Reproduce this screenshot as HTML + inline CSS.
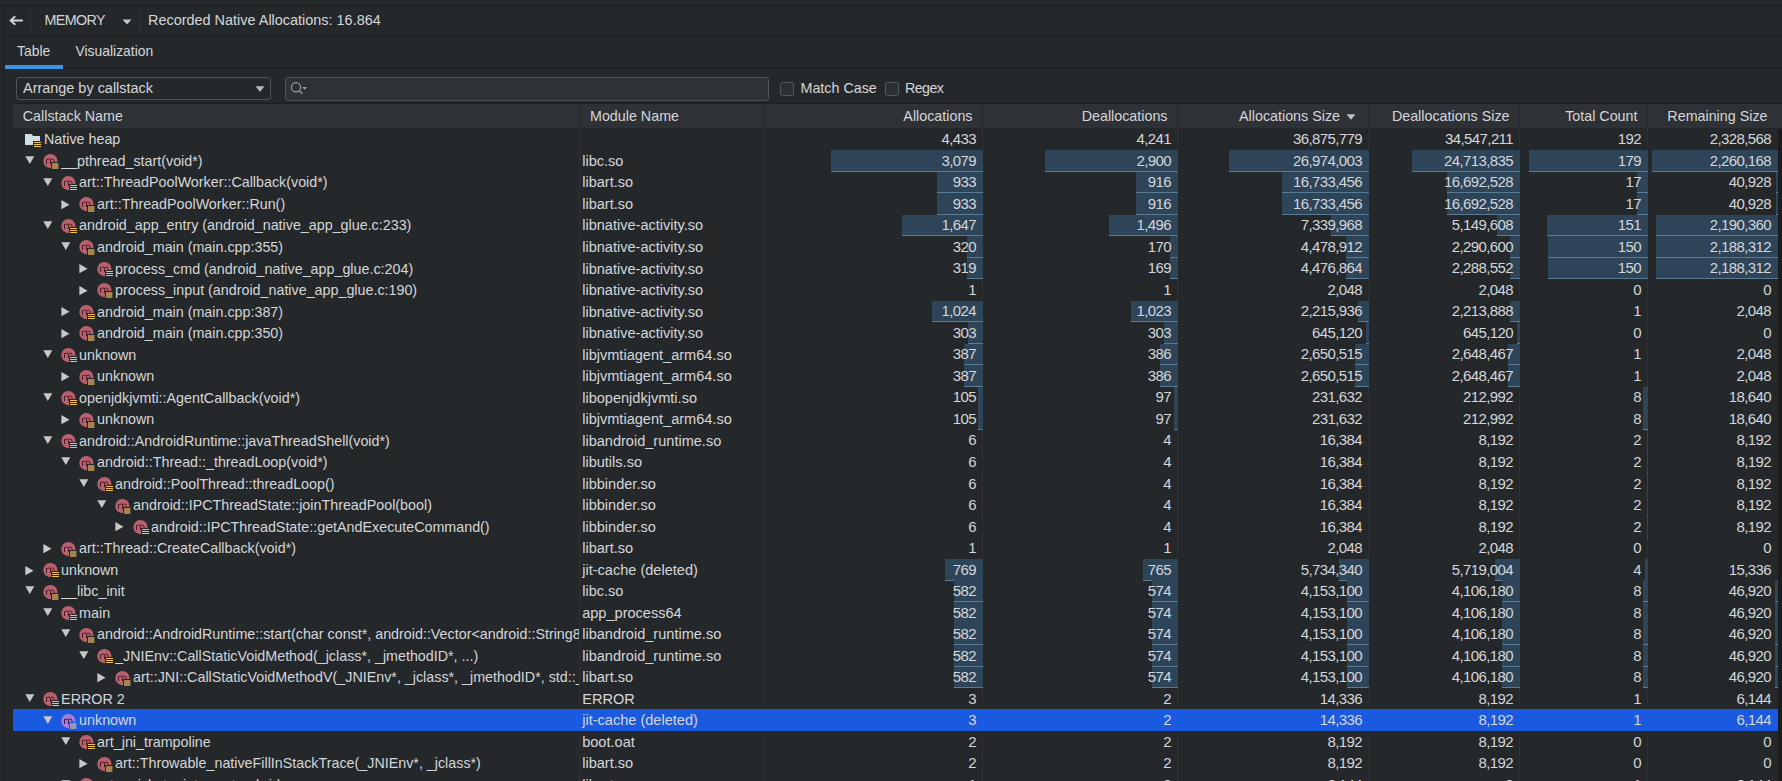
<!DOCTYPE html>
<html><head><meta charset="utf-8"><style>
*{margin:0;padding:0;box-sizing:border-box}
html,body{width:1782px;height:781px;overflow:hidden;background:#25282b;font-family:"Liberation Sans",sans-serif;color:#d4d6d9}
.a{position:absolute}
.t{position:absolute;white-space:nowrap;font-size:14.3px;line-height:17px}
.n{position:absolute;white-space:nowrap;font-size:15px;line-height:17px;text-align:right;letter-spacing:-0.6px}
.bar{position:absolute;background:#2d4459;border-bottom:1.3px solid #5b7a94}
.row{position:absolute;left:12.5px;width:1769.5px;height:21.54px}
</style></head>
<body>
<div class="a" style="left:0;top:0;width:1782px;height:5px;background:#26292c"></div>
<div class="a" style="left:0;top:5px;width:1782px;height:1px;background:#1c1e20"></div>
<div class="a" style="left:4px;top:5px;width:1px;height:776px;background:#1c1e20"></div>
<div class="a" style="left:0;top:133px;width:4px;height:1px;background:#1c1e20"></div>
<svg class="a" style="left:8px;top:14px" width="16" height="13" viewBox="0 0 16 13"><path d="M14.8 6.5H2.8M7.3 2.2L2.6 6.5L7.3 10.8" stroke="#d2d4d6" stroke-width="1.85" fill="none"/></svg>
<div class="a" style="left:30px;top:9px;width:1px;height:24px;background:repeating-linear-gradient(to bottom,#393c3f 0,#393c3f 2px,transparent 2px,transparent 3px)"></div>
<div class="t" style="left:44.5px;top:11.8px;font-size:14.3px;letter-spacing:-0.6px">MEMORY</div>
<svg class="a" style="left:122px;top:18.5px" width="10" height="6" viewBox="0 0 10 6"><path d="M0.5 0.5H9.5L5 5.5Z" fill="#c4c6c8"/></svg>
<div class="a" style="left:139px;top:9px;width:1px;height:24px;background:repeating-linear-gradient(to bottom,#393c3f 0,#393c3f 2px,transparent 2px,transparent 3px)"></div>
<div class="t" style="left:148px;top:12.2px;font-size:14.45px">Recorded Native Allocations: 16.864</div>
<div class="a" style="left:0;top:36px;width:1782px;height:1px;background:#1c1e20"></div>
<div class="t" style="left:17px;top:43px;font-size:13.9px">Table</div>
<div class="t" style="left:75.5px;top:43px;font-size:13.9px">Visualization</div>
<div class="a" style="left:5px;top:67px;width:1777px;height:2px;background:#1c1e20"></div>
<div class="a" style="left:4.5px;top:65px;width:58.5px;height:3.6px;background:#3a92e8"></div>
<div class="a" style="left:15.5px;top:76.5px;width:255.5px;height:23.5px;border:1px solid #505356;border-radius:3px"></div>
<div class="t" style="left:23px;top:79.8px;font-size:14.45px">Arrange by callstack</div>
<svg class="a" style="left:254.5px;top:85.5px" width="10" height="6" viewBox="0 0 10 6"><path d="M0.5 0.3H9.5L5 5.8Z" fill="#b8bcc0"/></svg>
<div class="a" style="left:285px;top:76.5px;width:484px;height:24px;background:#2e3235;border:1px solid #4f5255;border-radius:3px"></div>
<svg class="a" style="left:289px;top:80px" width="20" height="16" viewBox="0 0 20 16"><circle cx="7" cy="7.3" r="4.6" stroke="#8d9aa3" stroke-width="1.2" fill="none"/><path d="M10.2 10.6L13.4 13.8" stroke="#8d9aa3" stroke-width="1.4"/><path d="M13.3 7H18.1L15.7 10.1Z" fill="#8d9aa3"/></svg>
<div class="a" style="left:780px;top:81.5px;width:14px;height:14px;background:#2b3032;border:1px solid #55585b;border-radius:2.5px"></div>
<div class="t" style="left:800.5px;top:79.5px">Match Case</div>
<div class="a" style="left:884.5px;top:81.5px;width:14px;height:14px;background:#2b3032;border:1px solid #55585b;border-radius:2.5px"></div>
<div class="t" style="left:905px;top:79.5px;letter-spacing:-0.6px">Regex</div>
<div class="a" style="left:12.5px;top:103px;width:1769.5px;height:1px;background:#1c1e20"></div>
<div class="a" style="left:12.5px;top:104px;width:1769.5px;height:24px;background:#2e3135"></div>
<div class="a" style="left:579.0px;top:104px;width:1px;height:24px;background:#25282b"></div>
<div class="a" style="left:763.0px;top:104px;width:1px;height:24px;background:#25282b"></div>
<div class="a" style="left:982.0px;top:104px;width:1px;height:24px;background:#25282b"></div>
<div class="a" style="left:1177.0px;top:104px;width:1px;height:24px;background:#25282b"></div>
<div class="a" style="left:1368.0px;top:104px;width:1px;height:24px;background:#25282b"></div>
<div class="a" style="left:1519.0px;top:104px;width:1px;height:24px;background:#25282b"></div>
<div class="a" style="left:1647.0px;top:104px;width:1px;height:24px;background:#25282b"></div>
<div class="t" style="left:22.8px;top:107.5px">Callstack Name</div>
<div class="t" style="left:590px;top:107.5px">Module Name</div>
<div class="t" style="right:809.5px;top:107.5px">Allocations</div>
<div class="t" style="right:614.5px;top:107.5px">Deallocations</div>
<div class="t" style="right:442.0px;top:107.5px">Allocations Size</div>
<div class="t" style="right:272.5px;top:107.5px">Deallocations Size</div>
<div class="t" style="right:144.5px;top:107.5px">Total Count</div>
<div class="t" style="right:14.5px;top:107.5px">Remaining Size</div>
<svg class="a" style="left:1345.5px;top:113.5px" width="10" height="6" viewBox="0 0 10 6"><path d="M0.5 0.3H9.5L5 5.8Z" fill="#c0c2c4"/></svg>
<div class="a" style="left:579.0px;top:128px;width:1px;height:653px;background:#2e3134"></div>
<div class="a" style="left:763.0px;top:128px;width:1px;height:653px;background:#2e3134"></div>
<div class="a" style="left:982.0px;top:128px;width:1px;height:653px;background:#2e3134"></div>
<div class="a" style="left:1177.0px;top:128px;width:1px;height:653px;background:#2e3134"></div>
<div class="a" style="left:1368.0px;top:128px;width:1px;height:653px;background:#2e3134"></div>
<div class="a" style="left:1519.0px;top:128px;width:1px;height:653px;background:#2e3134"></div>
<div class="a" style="left:1647.0px;top:128px;width:1px;height:653px;background:#2e3134"></div>
<div class="a" style="left:1778px;top:128.5px;width:4px;height:653px;background:#1a1c1e"></div>
<svg class="a" style="left:25px;top:133px" width="18" height="16" viewBox="0 0 18 16"><path d="M0 1H6.3L8.2 3H15V12H0Z" fill="#cfdde5"/><rect x="8" y="8" width="9" height="7" fill="#25282b"/><rect x="9" y="9" width="7" height="1" fill="#eec465"/><rect x="9" y="11" width="7" height="1" fill="#eec465"/><rect x="9" y="13" width="7" height="1" fill="#eec465"/></svg>
<div class="t" style="left:44px;top:131.4px;max-width:535.0px;overflow:hidden">Native heap</div>
<div class="n" style="right:806.0px;top:130.20px">4,433</div>
<div class="n" style="right:611.0px;top:130.20px">4,241</div>
<div class="n" style="right:420.0px;top:130.20px">36,875,779</div>
<div class="n" style="right:269.0px;top:130.20px">34,547,211</div>
<div class="n" style="right:141.0px;top:130.20px">192</div>
<div class="n" style="right:11.0px;top:130.20px">2,328,568</div>
<svg class="a" style="left:25px;top:156px" width="10" height="9" viewBox="0 0 10 9"><path d="M0.3 0.2H9.3L4.8 8.1Z" fill="#c8c8c8"/></svg>
<svg class="a" style="left:43px;top:154px" width="18" height="16" viewBox="0 0 18 16"><circle cx="7.4" cy="7.1" r="7.1" fill="#b9606f"/><path d="M3.5 10V5.2M3.5 6.3Q4.3 5 5.6 5Q7.5 5 7.5 6.6V10M7.5 6.6Q7.6 5 9.2 5Q11 5 11 6.8V10" stroke="#4a1c26" stroke-width="1" fill="none"/><rect x="8" y="8" width="8" height="8" fill="#25282b"/><rect x="9" y="9" width="6.4" height="6" fill="#a5844f"/></svg>
<div class="t" style="left:61.1px;top:152.92000000000002px;max-width:517.9px;overflow:hidden">__pthread_start(void*)</div>
<div class="t" style="left:582.2px;top:152.92000000000002px;font-size:14.55px">libc.so</div>
<div class="bar" style="left:830.89px;top:150.02px;width:152.11px;height:21.8px"></div>
<div class="n" style="right:806.0px;top:151.72px">3,079</div>
<div class="bar" style="left:1044.66px;top:150.02px;width:133.34px;height:21.8px"></div>
<div class="n" style="right:611.0px;top:151.72px">2,900</div>
<div class="bar" style="left:1229.29px;top:150.02px;width:139.71px;height:21.8px"></div>
<div class="n" style="right:420.0px;top:151.72px">26,974,003</div>
<div class="bar" style="left:1411.98px;top:150.02px;width:108.02px;height:21.8px"></div>
<div class="n" style="right:269.0px;top:151.72px">24,713,835</div>
<div class="bar" style="left:1528.67px;top:150.02px;width:119.33px;height:21.8px"></div>
<div class="n" style="right:141.0px;top:151.72px">179</div>
<div class="bar" style="left:1651.82px;top:150.02px;width:126.18px;height:21.8px"></div>
<div class="n" style="right:11.0px;top:151.72px">2,260,168</div>
<svg class="a" style="left:43px;top:178px" width="10" height="9" viewBox="0 0 10 9"><path d="M0.3 0.2H9.3L4.8 8.1Z" fill="#c8c8c8"/></svg>
<svg class="a" style="left:61px;top:176px" width="18" height="16" viewBox="0 0 18 16"><circle cx="7.4" cy="7.1" r="7.1" fill="#b9606f"/><path d="M3.5 10V5.2M3.5 6.3Q4.3 5 5.6 5Q7.5 5 7.5 6.6V10M7.5 6.6Q7.6 5 9.2 5Q11 5 11 6.8V10" stroke="#4a1c26" stroke-width="1" fill="none"/><rect x="8" y="8" width="9" height="7" fill="#25282b"/><rect x="9" y="9" width="7" height="1" fill="#eac262"/><rect x="9" y="11" width="7" height="1" fill="#eac262"/><rect x="9" y="13" width="7" height="1" fill="#eac262"/></svg>
<div class="t" style="left:79.1px;top:174.44px;max-width:499.9px;overflow:hidden">art::ThreadPoolWorker::Callback(void*)</div>
<div class="t" style="left:582.2px;top:174.44px;font-size:14.55px">libart.so</div>
<div class="bar" style="left:936.91px;top:171.54px;width:46.09px;height:21.8px"></div>
<div class="n" style="right:806.0px;top:173.24px">933</div>
<div class="bar" style="left:1135.88px;top:171.54px;width:42.12px;height:21.8px"></div>
<div class="n" style="right:611.0px;top:173.24px">916</div>
<div class="bar" style="left:1282.33px;top:171.54px;width:86.67px;height:21.8px"></div>
<div class="n" style="right:420.0px;top:173.24px">16,733,456</div>
<div class="bar" style="left:1447.04px;top:171.54px;width:72.96px;height:21.8px"></div>
<div class="n" style="right:269.0px;top:173.24px">16,692,528</div>
<div class="bar" style="left:1636.67px;top:171.54px;width:11.33px;height:21.8px"></div>
<div class="n" style="right:141.0px;top:173.24px">17</div>
<div class="bar" style="left:1775.72px;top:171.54px;width:2.28px;height:21.8px"></div>
<div class="n" style="right:11.0px;top:173.24px">40,928</div>
<svg class="a" style="left:61px;top:200px" width="10" height="10" viewBox="0 0 10 10"><path d="M0.4 0.1V9.3L8.5 4.7Z" fill="#c8c8c8"/></svg>
<svg class="a" style="left:79px;top:197px" width="18" height="16" viewBox="0 0 18 16"><circle cx="7.4" cy="7.1" r="7.1" fill="#b9606f"/><path d="M3.5 10V5.2M3.5 6.3Q4.3 5 5.6 5Q7.5 5 7.5 6.6V10M7.5 6.6Q7.6 5 9.2 5Q11 5 11 6.8V10" stroke="#4a1c26" stroke-width="1" fill="none"/><rect x="8" y="8" width="8" height="8" fill="#25282b"/><rect x="9" y="9" width="6.4" height="6" fill="#a5844f"/></svg>
<div class="t" style="left:97.1px;top:195.96px;max-width:481.9px;overflow:hidden">art::ThreadPoolWorker::Run()</div>
<div class="t" style="left:582.2px;top:195.96px;font-size:14.55px">libart.so</div>
<div class="bar" style="left:936.91px;top:193.06px;width:46.09px;height:21.8px"></div>
<div class="n" style="right:806.0px;top:194.76px">933</div>
<div class="bar" style="left:1135.88px;top:193.06px;width:42.12px;height:21.8px"></div>
<div class="n" style="right:611.0px;top:194.76px">916</div>
<div class="bar" style="left:1282.33px;top:193.06px;width:86.67px;height:21.8px"></div>
<div class="n" style="right:420.0px;top:194.76px">16,733,456</div>
<div class="bar" style="left:1447.04px;top:193.06px;width:72.96px;height:21.8px"></div>
<div class="n" style="right:269.0px;top:194.76px">16,692,528</div>
<div class="bar" style="left:1636.67px;top:193.06px;width:11.33px;height:21.8px"></div>
<div class="n" style="right:141.0px;top:194.76px">17</div>
<div class="bar" style="left:1775.72px;top:193.06px;width:2.28px;height:21.8px"></div>
<div class="n" style="right:11.0px;top:194.76px">40,928</div>
<svg class="a" style="left:43px;top:221px" width="10" height="9" viewBox="0 0 10 9"><path d="M0.3 0.2H9.3L4.8 8.1Z" fill="#c8c8c8"/></svg>
<svg class="a" style="left:61px;top:219px" width="18" height="16" viewBox="0 0 18 16"><circle cx="7.4" cy="7.1" r="7.1" fill="#b9606f"/><path d="M3.5 10V5.2M3.5 6.3Q4.3 5 5.6 5Q7.5 5 7.5 6.6V10M7.5 6.6Q7.6 5 9.2 5Q11 5 11 6.8V10" stroke="#4a1c26" stroke-width="1" fill="none"/><rect x="8" y="8" width="9" height="7" fill="#25282b"/><rect x="9" y="9" width="7" height="1" fill="#eac262"/><rect x="9" y="11" width="7" height="1" fill="#eac262"/><rect x="9" y="13" width="7" height="1" fill="#eac262"/></svg>
<div class="t" style="left:79.1px;top:217.48px;max-width:499.9px;overflow:hidden">android_app_entry (android_native_app_glue.c:233)</div>
<div class="t" style="left:582.2px;top:217.48px;font-size:14.55px">libnative-activity.so</div>
<div class="bar" style="left:901.63px;top:214.58px;width:81.37px;height:21.8px"></div>
<div class="n" style="right:806.0px;top:216.28px">1,647</div>
<div class="bar" style="left:1109.21px;top:214.58px;width:68.79px;height:21.8px"></div>
<div class="n" style="right:611.0px;top:216.28px">1,496</div>
<div class="bar" style="left:1330.98px;top:214.58px;width:38.02px;height:21.8px"></div>
<div class="n" style="right:420.0px;top:216.28px">7,339,968</div>
<div class="bar" style="left:1497.49px;top:214.58px;width:22.51px;height:21.8px"></div>
<div class="n" style="right:269.0px;top:216.28px">5,149,608</div>
<div class="bar" style="left:1547.33px;top:214.58px;width:100.67px;height:21.8px"></div>
<div class="n" style="right:141.0px;top:216.28px">151</div>
<div class="bar" style="left:1655.72px;top:214.58px;width:122.28px;height:21.8px"></div>
<div class="n" style="right:11.0px;top:216.28px">2,190,360</div>
<svg class="a" style="left:61px;top:242px" width="10" height="9" viewBox="0 0 10 9"><path d="M0.3 0.2H9.3L4.8 8.1Z" fill="#c8c8c8"/></svg>
<svg class="a" style="left:79px;top:240px" width="18" height="16" viewBox="0 0 18 16"><circle cx="7.4" cy="7.1" r="7.1" fill="#b9606f"/><path d="M3.5 10V5.2M3.5 6.3Q4.3 5 5.6 5Q7.5 5 7.5 6.6V10M7.5 6.6Q7.6 5 9.2 5Q11 5 11 6.8V10" stroke="#4a1c26" stroke-width="1" fill="none"/><rect x="8" y="8" width="8" height="8" fill="#25282b"/><rect x="9" y="9" width="6.4" height="6" fill="#a5844f"/></svg>
<div class="t" style="left:97.1px;top:239.0px;max-width:481.9px;overflow:hidden">android_main (main.cpp:355)</div>
<div class="t" style="left:582.2px;top:239.0px;font-size:14.55px">libnative-activity.so</div>
<div class="bar" style="left:967.19px;top:236.10px;width:15.81px;height:21.8px"></div>
<div class="n" style="right:806.0px;top:237.80px">320</div>
<div class="bar" style="left:1170.18px;top:236.10px;width:7.82px;height:21.8px"></div>
<div class="n" style="right:611.0px;top:237.80px">170</div>
<div class="bar" style="left:1345.80px;top:236.10px;width:23.20px;height:21.8px"></div>
<div class="n" style="right:420.0px;top:237.80px">4,478,912</div>
<div class="bar" style="left:1509.99px;top:236.10px;width:10.01px;height:21.8px"></div>
<div class="n" style="right:269.0px;top:237.80px">2,290,600</div>
<div class="bar" style="left:1548.00px;top:236.10px;width:100.00px;height:21.8px"></div>
<div class="n" style="right:141.0px;top:237.80px">150</div>
<div class="bar" style="left:1655.83px;top:236.10px;width:122.17px;height:21.8px"></div>
<div class="n" style="right:11.0px;top:237.80px">2,188,312</div>
<svg class="a" style="left:79px;top:264px" width="10" height="10" viewBox="0 0 10 10"><path d="M0.4 0.1V9.3L8.5 4.7Z" fill="#c8c8c8"/></svg>
<svg class="a" style="left:97px;top:262px" width="18" height="16" viewBox="0 0 18 16"><circle cx="7.4" cy="7.1" r="7.1" fill="#b9606f"/><path d="M3.5 10V5.2M3.5 6.3Q4.3 5 5.6 5Q7.5 5 7.5 6.6V10M7.5 6.6Q7.6 5 9.2 5Q11 5 11 6.8V10" stroke="#4a1c26" stroke-width="1" fill="none"/><rect x="8" y="8" width="9" height="7" fill="#25282b"/><rect x="9" y="9" width="7" height="1" fill="#eac262"/><rect x="9" y="11" width="7" height="1" fill="#eac262"/><rect x="9" y="13" width="7" height="1" fill="#eac262"/></svg>
<div class="t" style="left:115.10000000000001px;top:260.52000000000004px;max-width:463.9px;overflow:hidden">process_cmd (android_native_app_glue.c:204)</div>
<div class="t" style="left:582.2px;top:260.52000000000004px;font-size:14.55px">libnative-activity.so</div>
<div class="bar" style="left:967.24px;top:257.62px;width:15.76px;height:21.8px"></div>
<div class="n" style="right:806.0px;top:259.32px">319</div>
<div class="bar" style="left:1170.23px;top:257.62px;width:7.77px;height:21.8px"></div>
<div class="n" style="right:611.0px;top:259.32px">169</div>
<div class="bar" style="left:1345.81px;top:257.62px;width:23.19px;height:21.8px"></div>
<div class="n" style="right:420.0px;top:259.32px">4,476,864</div>
<div class="bar" style="left:1510.00px;top:257.62px;width:10.00px;height:21.8px"></div>
<div class="n" style="right:269.0px;top:259.32px">2,288,552</div>
<div class="bar" style="left:1548.00px;top:257.62px;width:100.00px;height:21.8px"></div>
<div class="n" style="right:141.0px;top:259.32px">150</div>
<div class="bar" style="left:1655.83px;top:257.62px;width:122.17px;height:21.8px"></div>
<div class="n" style="right:11.0px;top:259.32px">2,188,312</div>
<svg class="a" style="left:79px;top:286px" width="10" height="10" viewBox="0 0 10 10"><path d="M0.4 0.1V9.3L8.5 4.7Z" fill="#c8c8c8"/></svg>
<svg class="a" style="left:97px;top:283px" width="18" height="16" viewBox="0 0 18 16"><circle cx="7.4" cy="7.1" r="7.1" fill="#b9606f"/><path d="M3.5 10V5.2M3.5 6.3Q4.3 5 5.6 5Q7.5 5 7.5 6.6V10M7.5 6.6Q7.6 5 9.2 5Q11 5 11 6.8V10" stroke="#4a1c26" stroke-width="1" fill="none"/><rect x="8" y="8" width="8" height="8" fill="#25282b"/><rect x="9" y="9" width="6.4" height="6" fill="#a5844f"/></svg>
<div class="t" style="left:115.10000000000001px;top:282.04px;max-width:463.9px;overflow:hidden">process_input (android_native_app_glue.c:190)</div>
<div class="t" style="left:582.2px;top:282.04px;font-size:14.55px">libnative-activity.so</div>
<div class="n" style="right:806.0px;top:280.84px">1</div>
<div class="n" style="right:611.0px;top:280.84px">1</div>
<div class="n" style="right:420.0px;top:280.84px">2,048</div>
<div class="n" style="right:269.0px;top:280.84px">2,048</div>
<div class="n" style="right:141.0px;top:280.84px">0</div>
<div class="n" style="right:11.0px;top:280.84px">0</div>
<svg class="a" style="left:61px;top:307px" width="10" height="10" viewBox="0 0 10 10"><path d="M0.4 0.1V9.3L8.5 4.7Z" fill="#c8c8c8"/></svg>
<svg class="a" style="left:79px;top:305px" width="18" height="16" viewBox="0 0 18 16"><circle cx="7.4" cy="7.1" r="7.1" fill="#b9606f"/><path d="M3.5 10V5.2M3.5 6.3Q4.3 5 5.6 5Q7.5 5 7.5 6.6V10M7.5 6.6Q7.6 5 9.2 5Q11 5 11 6.8V10" stroke="#4a1c26" stroke-width="1" fill="none"/><rect x="8" y="8" width="9" height="7" fill="#25282b"/><rect x="9" y="9" width="7" height="1" fill="#eac262"/><rect x="9" y="11" width="7" height="1" fill="#eac262"/><rect x="9" y="13" width="7" height="1" fill="#eac262"/></svg>
<div class="t" style="left:97.1px;top:303.56000000000006px;max-width:481.9px;overflow:hidden">android_main (main.cpp:387)</div>
<div class="t" style="left:582.2px;top:303.56000000000006px;font-size:14.55px">libnative-activity.so</div>
<div class="bar" style="left:932.41px;top:300.66px;width:50.59px;height:21.8px"></div>
<div class="n" style="right:806.0px;top:302.36px">1,024</div>
<div class="bar" style="left:1130.96px;top:300.66px;width:47.04px;height:21.8px"></div>
<div class="n" style="right:611.0px;top:302.36px">1,023</div>
<div class="bar" style="left:1357.52px;top:300.66px;width:11.48px;height:21.8px"></div>
<div class="n" style="right:420.0px;top:302.36px">2,215,936</div>
<div class="bar" style="left:1510.32px;top:300.66px;width:9.68px;height:21.8px"></div>
<div class="n" style="right:269.0px;top:302.36px">2,213,888</div>
<div class="n" style="right:141.0px;top:302.36px">1</div>
<div class="n" style="right:11.0px;top:302.36px">2,048</div>
<svg class="a" style="left:61px;top:329px" width="10" height="10" viewBox="0 0 10 10"><path d="M0.4 0.1V9.3L8.5 4.7Z" fill="#c8c8c8"/></svg>
<svg class="a" style="left:79px;top:326px" width="18" height="16" viewBox="0 0 18 16"><circle cx="7.4" cy="7.1" r="7.1" fill="#b9606f"/><path d="M3.5 10V5.2M3.5 6.3Q4.3 5 5.6 5Q7.5 5 7.5 6.6V10M7.5 6.6Q7.6 5 9.2 5Q11 5 11 6.8V10" stroke="#4a1c26" stroke-width="1" fill="none"/><rect x="8" y="8" width="8" height="8" fill="#25282b"/><rect x="9" y="9" width="6.4" height="6" fill="#a5844f"/></svg>
<div class="t" style="left:97.1px;top:325.08000000000004px;max-width:481.9px;overflow:hidden">android_main (main.cpp:350)</div>
<div class="t" style="left:582.2px;top:325.08000000000004px;font-size:14.55px">libnative-activity.so</div>
<div class="bar" style="left:968.03px;top:322.18px;width:14.97px;height:21.8px"></div>
<div class="n" style="right:806.0px;top:323.88px">303</div>
<div class="bar" style="left:1164.07px;top:322.18px;width:13.93px;height:21.8px"></div>
<div class="n" style="right:611.0px;top:323.88px">303</div>
<div class="bar" style="left:1365.66px;top:322.18px;width:3.34px;height:21.8px"></div>
<div class="n" style="right:420.0px;top:323.88px">645,120</div>
<div class="bar" style="left:1517.18px;top:322.18px;width:2.82px;height:21.8px"></div>
<div class="n" style="right:269.0px;top:323.88px">645,120</div>
<div class="n" style="right:141.0px;top:323.88px">0</div>
<div class="n" style="right:11.0px;top:323.88px">0</div>
<svg class="a" style="left:43px;top:350px" width="10" height="9" viewBox="0 0 10 9"><path d="M0.3 0.2H9.3L4.8 8.1Z" fill="#c8c8c8"/></svg>
<svg class="a" style="left:61px;top:348px" width="18" height="16" viewBox="0 0 18 16"><circle cx="7.4" cy="7.1" r="7.1" fill="#b9606f"/><path d="M3.5 10V5.2M3.5 6.3Q4.3 5 5.6 5Q7.5 5 7.5 6.6V10M7.5 6.6Q7.6 5 9.2 5Q11 5 11 6.8V10" stroke="#4a1c26" stroke-width="1" fill="none"/><rect x="8" y="8" width="9" height="7" fill="#25282b"/><rect x="9" y="9" width="7" height="1" fill="#eac262"/><rect x="9" y="11" width="7" height="1" fill="#eac262"/><rect x="9" y="13" width="7" height="1" fill="#eac262"/></svg>
<div class="t" style="left:79.1px;top:346.6px;max-width:499.9px;overflow:hidden">unknown</div>
<div class="t" style="left:582.2px;top:346.6px;font-size:14.55px">libjvmtiagent_arm64.so</div>
<div class="bar" style="left:963.88px;top:343.70px;width:19.12px;height:21.8px"></div>
<div class="n" style="right:806.0px;top:345.40px">387</div>
<div class="bar" style="left:1160.25px;top:343.70px;width:17.75px;height:21.8px"></div>
<div class="n" style="right:611.0px;top:345.40px">386</div>
<div class="bar" style="left:1355.27px;top:343.70px;width:13.73px;height:21.8px"></div>
<div class="n" style="right:420.0px;top:345.40px">2,650,515</div>
<div class="bar" style="left:1508.42px;top:343.70px;width:11.58px;height:21.8px"></div>
<div class="n" style="right:269.0px;top:345.40px">2,648,467</div>
<div class="n" style="right:141.0px;top:345.40px">1</div>
<div class="n" style="right:11.0px;top:345.40px">2,048</div>
<svg class="a" style="left:61px;top:372px" width="10" height="10" viewBox="0 0 10 10"><path d="M0.4 0.1V9.3L8.5 4.7Z" fill="#c8c8c8"/></svg>
<svg class="a" style="left:79px;top:370px" width="18" height="16" viewBox="0 0 18 16"><circle cx="7.4" cy="7.1" r="7.1" fill="#b9606f"/><path d="M3.5 10V5.2M3.5 6.3Q4.3 5 5.6 5Q7.5 5 7.5 6.6V10M7.5 6.6Q7.6 5 9.2 5Q11 5 11 6.8V10" stroke="#4a1c26" stroke-width="1" fill="none"/><rect x="8" y="8" width="8" height="8" fill="#25282b"/><rect x="9" y="9" width="6.4" height="6" fill="#a5844f"/></svg>
<div class="t" style="left:97.1px;top:368.12px;max-width:481.9px;overflow:hidden">unknown</div>
<div class="t" style="left:582.2px;top:368.12px;font-size:14.55px">libjvmtiagent_arm64.so</div>
<div class="bar" style="left:963.88px;top:365.22px;width:19.12px;height:21.8px"></div>
<div class="n" style="right:806.0px;top:366.92px">387</div>
<div class="bar" style="left:1160.25px;top:365.22px;width:17.75px;height:21.8px"></div>
<div class="n" style="right:611.0px;top:366.92px">386</div>
<div class="bar" style="left:1355.27px;top:365.22px;width:13.73px;height:21.8px"></div>
<div class="n" style="right:420.0px;top:366.92px">2,650,515</div>
<div class="bar" style="left:1508.42px;top:365.22px;width:11.58px;height:21.8px"></div>
<div class="n" style="right:269.0px;top:366.92px">2,648,467</div>
<div class="n" style="right:141.0px;top:366.92px">1</div>
<div class="n" style="right:11.0px;top:366.92px">2,048</div>
<svg class="a" style="left:43px;top:393px" width="10" height="9" viewBox="0 0 10 9"><path d="M0.3 0.2H9.3L4.8 8.1Z" fill="#c8c8c8"/></svg>
<svg class="a" style="left:61px;top:391px" width="18" height="16" viewBox="0 0 18 16"><circle cx="7.4" cy="7.1" r="7.1" fill="#b9606f"/><path d="M3.5 10V5.2M3.5 6.3Q4.3 5 5.6 5Q7.5 5 7.5 6.6V10M7.5 6.6Q7.6 5 9.2 5Q11 5 11 6.8V10" stroke="#4a1c26" stroke-width="1" fill="none"/><rect x="8" y="8" width="9" height="7" fill="#25282b"/><rect x="9" y="9" width="7" height="1" fill="#eac262"/><rect x="9" y="11" width="7" height="1" fill="#eac262"/><rect x="9" y="13" width="7" height="1" fill="#eac262"/></svg>
<div class="t" style="left:79.1px;top:389.64000000000004px;max-width:499.9px;overflow:hidden">openjdkjvmti::AgentCallback(void*)</div>
<div class="t" style="left:582.2px;top:389.64000000000004px;font-size:14.55px">libopenjdkjvmti.so</div>
<div class="bar" style="left:977.81px;top:386.74px;width:5.19px;height:21.8px"></div>
<div class="n" style="right:806.0px;top:388.44px">105</div>
<div class="bar" style="left:1173.54px;top:386.74px;width:4.46px;height:21.8px"></div>
<div class="n" style="right:611.0px;top:388.44px">97</div>
<div class="n" style="right:420.0px;top:388.44px">231,632</div>
<div class="n" style="right:269.0px;top:388.44px">212,992</div>
<div class="bar" style="left:1642.67px;top:386.74px;width:5.33px;height:21.8px"></div>
<div class="n" style="right:141.0px;top:388.44px">8</div>
<div class="n" style="right:11.0px;top:388.44px">18,640</div>
<svg class="a" style="left:61px;top:415px" width="10" height="10" viewBox="0 0 10 10"><path d="M0.4 0.1V9.3L8.5 4.7Z" fill="#c8c8c8"/></svg>
<svg class="a" style="left:79px;top:413px" width="18" height="16" viewBox="0 0 18 16"><circle cx="7.4" cy="7.1" r="7.1" fill="#b9606f"/><path d="M3.5 10V5.2M3.5 6.3Q4.3 5 5.6 5Q7.5 5 7.5 6.6V10M7.5 6.6Q7.6 5 9.2 5Q11 5 11 6.8V10" stroke="#4a1c26" stroke-width="1" fill="none"/><rect x="8" y="8" width="8" height="8" fill="#25282b"/><rect x="9" y="9" width="6.4" height="6" fill="#a5844f"/></svg>
<div class="t" style="left:97.1px;top:411.16px;max-width:481.9px;overflow:hidden">unknown</div>
<div class="t" style="left:582.2px;top:411.16px;font-size:14.55px">libjvmtiagent_arm64.so</div>
<div class="bar" style="left:977.81px;top:408.26px;width:5.19px;height:21.8px"></div>
<div class="n" style="right:806.0px;top:409.96px">105</div>
<div class="bar" style="left:1173.54px;top:408.26px;width:4.46px;height:21.8px"></div>
<div class="n" style="right:611.0px;top:409.96px">97</div>
<div class="n" style="right:420.0px;top:409.96px">231,632</div>
<div class="n" style="right:269.0px;top:409.96px">212,992</div>
<div class="bar" style="left:1642.67px;top:408.26px;width:5.33px;height:21.8px"></div>
<div class="n" style="right:141.0px;top:409.96px">8</div>
<div class="n" style="right:11.0px;top:409.96px">18,640</div>
<svg class="a" style="left:43px;top:436px" width="10" height="9" viewBox="0 0 10 9"><path d="M0.3 0.2H9.3L4.8 8.1Z" fill="#c8c8c8"/></svg>
<svg class="a" style="left:61px;top:434px" width="18" height="16" viewBox="0 0 18 16"><circle cx="7.4" cy="7.1" r="7.1" fill="#b9606f"/><path d="M3.5 10V5.2M3.5 6.3Q4.3 5 5.6 5Q7.5 5 7.5 6.6V10M7.5 6.6Q7.6 5 9.2 5Q11 5 11 6.8V10" stroke="#4a1c26" stroke-width="1" fill="none"/><rect x="8" y="8" width="9" height="7" fill="#25282b"/><rect x="9" y="9" width="7" height="1" fill="#eac262"/><rect x="9" y="11" width="7" height="1" fill="#eac262"/><rect x="9" y="13" width="7" height="1" fill="#eac262"/></svg>
<div class="t" style="left:79.1px;top:432.68px;max-width:499.9px;overflow:hidden">android::AndroidRuntime::javaThreadShell(void*)</div>
<div class="t" style="left:582.2px;top:432.68px;font-size:14.55px">libandroid_runtime.so</div>
<div class="n" style="right:806.0px;top:431.48px">6</div>
<div class="n" style="right:611.0px;top:431.48px">4</div>
<div class="n" style="right:420.0px;top:431.48px">16,384</div>
<div class="n" style="right:269.0px;top:431.48px">8,192</div>
<div class="bar" style="left:1646.67px;top:429.78px;width:1.33px;height:21.8px"></div>
<div class="n" style="right:141.0px;top:431.48px">2</div>
<div class="n" style="right:11.0px;top:431.48px">8,192</div>
<svg class="a" style="left:61px;top:457px" width="10" height="9" viewBox="0 0 10 9"><path d="M0.3 0.2H9.3L4.8 8.1Z" fill="#c8c8c8"/></svg>
<svg class="a" style="left:79px;top:456px" width="18" height="16" viewBox="0 0 18 16"><circle cx="7.4" cy="7.1" r="7.1" fill="#b9606f"/><path d="M3.5 10V5.2M3.5 6.3Q4.3 5 5.6 5Q7.5 5 7.5 6.6V10M7.5 6.6Q7.6 5 9.2 5Q11 5 11 6.8V10" stroke="#4a1c26" stroke-width="1" fill="none"/><rect x="8" y="8" width="8" height="8" fill="#25282b"/><rect x="9" y="9" width="6.4" height="6" fill="#a5844f"/></svg>
<div class="t" style="left:97.1px;top:454.20000000000005px;max-width:481.9px;overflow:hidden">android::Thread::_threadLoop(void*)</div>
<div class="t" style="left:582.2px;top:454.20000000000005px;font-size:14.55px">libutils.so</div>
<div class="n" style="right:806.0px;top:453.00px">6</div>
<div class="n" style="right:611.0px;top:453.00px">4</div>
<div class="n" style="right:420.0px;top:453.00px">16,384</div>
<div class="n" style="right:269.0px;top:453.00px">8,192</div>
<div class="bar" style="left:1646.67px;top:451.30px;width:1.33px;height:21.8px"></div>
<div class="n" style="right:141.0px;top:453.00px">2</div>
<div class="n" style="right:11.0px;top:453.00px">8,192</div>
<svg class="a" style="left:79px;top:479px" width="10" height="9" viewBox="0 0 10 9"><path d="M0.3 0.2H9.3L4.8 8.1Z" fill="#c8c8c8"/></svg>
<svg class="a" style="left:97px;top:477px" width="18" height="16" viewBox="0 0 18 16"><circle cx="7.4" cy="7.1" r="7.1" fill="#b9606f"/><path d="M3.5 10V5.2M3.5 6.3Q4.3 5 5.6 5Q7.5 5 7.5 6.6V10M7.5 6.6Q7.6 5 9.2 5Q11 5 11 6.8V10" stroke="#4a1c26" stroke-width="1" fill="none"/><rect x="8" y="8" width="9" height="7" fill="#25282b"/><rect x="9" y="9" width="7" height="1" fill="#eac262"/><rect x="9" y="11" width="7" height="1" fill="#eac262"/><rect x="9" y="13" width="7" height="1" fill="#eac262"/></svg>
<div class="t" style="left:115.10000000000001px;top:475.72px;max-width:463.9px;overflow:hidden">android::PoolThread::threadLoop()</div>
<div class="t" style="left:582.2px;top:475.72px;font-size:14.55px">libbinder.so</div>
<div class="n" style="right:806.0px;top:474.52px">6</div>
<div class="n" style="right:611.0px;top:474.52px">4</div>
<div class="n" style="right:420.0px;top:474.52px">16,384</div>
<div class="n" style="right:269.0px;top:474.52px">8,192</div>
<div class="bar" style="left:1646.67px;top:472.82px;width:1.33px;height:21.8px"></div>
<div class="n" style="right:141.0px;top:474.52px">2</div>
<div class="n" style="right:11.0px;top:474.52px">8,192</div>
<svg class="a" style="left:97px;top:500px" width="10" height="9" viewBox="0 0 10 9"><path d="M0.3 0.2H9.3L4.8 8.1Z" fill="#c8c8c8"/></svg>
<svg class="a" style="left:115px;top:499px" width="18" height="16" viewBox="0 0 18 16"><circle cx="7.4" cy="7.1" r="7.1" fill="#b9606f"/><path d="M3.5 10V5.2M3.5 6.3Q4.3 5 5.6 5Q7.5 5 7.5 6.6V10M7.5 6.6Q7.6 5 9.2 5Q11 5 11 6.8V10" stroke="#4a1c26" stroke-width="1" fill="none"/><rect x="8" y="8" width="8" height="8" fill="#25282b"/><rect x="9" y="9" width="6.4" height="6" fill="#a5844f"/></svg>
<div class="t" style="left:133.10000000000002px;top:497.24px;max-width:445.9px;overflow:hidden">android::IPCThreadState::joinThreadPool(bool)</div>
<div class="t" style="left:582.2px;top:497.24px;font-size:14.55px">libbinder.so</div>
<div class="n" style="right:806.0px;top:496.04px">6</div>
<div class="n" style="right:611.0px;top:496.04px">4</div>
<div class="n" style="right:420.0px;top:496.04px">16,384</div>
<div class="n" style="right:269.0px;top:496.04px">8,192</div>
<div class="bar" style="left:1646.67px;top:494.34px;width:1.33px;height:21.8px"></div>
<div class="n" style="right:141.0px;top:496.04px">2</div>
<div class="n" style="right:11.0px;top:496.04px">8,192</div>
<svg class="a" style="left:115px;top:522px" width="10" height="10" viewBox="0 0 10 10"><path d="M0.4 0.1V9.3L8.5 4.7Z" fill="#c8c8c8"/></svg>
<svg class="a" style="left:133px;top:520px" width="18" height="16" viewBox="0 0 18 16"><circle cx="7.4" cy="7.1" r="7.1" fill="#b9606f"/><path d="M3.5 10V5.2M3.5 6.3Q4.3 5 5.6 5Q7.5 5 7.5 6.6V10M7.5 6.6Q7.6 5 9.2 5Q11 5 11 6.8V10" stroke="#4a1c26" stroke-width="1" fill="none"/><rect x="8" y="8" width="9" height="7" fill="#25282b"/><rect x="9" y="9" width="7" height="1" fill="#eac262"/><rect x="9" y="11" width="7" height="1" fill="#eac262"/><rect x="9" y="13" width="7" height="1" fill="#eac262"/></svg>
<div class="t" style="left:151.10000000000002px;top:518.7600000000001px;max-width:427.9px;overflow:hidden">android::IPCThreadState::getAndExecuteCommand()</div>
<div class="t" style="left:582.2px;top:518.7600000000001px;font-size:14.55px">libbinder.so</div>
<div class="n" style="right:806.0px;top:517.56px">6</div>
<div class="n" style="right:611.0px;top:517.56px">4</div>
<div class="n" style="right:420.0px;top:517.56px">16,384</div>
<div class="n" style="right:269.0px;top:517.56px">8,192</div>
<div class="bar" style="left:1646.67px;top:515.86px;width:1.33px;height:21.8px"></div>
<div class="n" style="right:141.0px;top:517.56px">2</div>
<div class="n" style="right:11.0px;top:517.56px">8,192</div>
<svg class="a" style="left:43px;top:544px" width="10" height="10" viewBox="0 0 10 10"><path d="M0.4 0.1V9.3L8.5 4.7Z" fill="#c8c8c8"/></svg>
<svg class="a" style="left:61px;top:542px" width="18" height="16" viewBox="0 0 18 16"><circle cx="7.4" cy="7.1" r="7.1" fill="#b9606f"/><path d="M3.5 10V5.2M3.5 6.3Q4.3 5 5.6 5Q7.5 5 7.5 6.6V10M7.5 6.6Q7.6 5 9.2 5Q11 5 11 6.8V10" stroke="#4a1c26" stroke-width="1" fill="none"/><rect x="8" y="8" width="8" height="8" fill="#25282b"/><rect x="9" y="9" width="6.4" height="6" fill="#a5844f"/></svg>
<div class="t" style="left:79.1px;top:540.2800000000001px;max-width:499.9px;overflow:hidden">art::Thread::CreateCallback(void*)</div>
<div class="t" style="left:582.2px;top:540.2800000000001px;font-size:14.55px">libart.so</div>
<div class="n" style="right:806.0px;top:539.08px">1</div>
<div class="n" style="right:611.0px;top:539.08px">1</div>
<div class="n" style="right:420.0px;top:539.08px">2,048</div>
<div class="n" style="right:269.0px;top:539.08px">2,048</div>
<div class="n" style="right:141.0px;top:539.08px">0</div>
<div class="n" style="right:11.0px;top:539.08px">0</div>
<svg class="a" style="left:25px;top:566px" width="10" height="10" viewBox="0 0 10 10"><path d="M0.4 0.1V9.3L8.5 4.7Z" fill="#c8c8c8"/></svg>
<svg class="a" style="left:43px;top:563px" width="18" height="16" viewBox="0 0 18 16"><circle cx="7.4" cy="7.1" r="7.1" fill="#b9606f"/><path d="M3.5 10V5.2M3.5 6.3Q4.3 5 5.6 5Q7.5 5 7.5 6.6V10M7.5 6.6Q7.6 5 9.2 5Q11 5 11 6.8V10" stroke="#4a1c26" stroke-width="1" fill="none"/><rect x="8" y="8" width="9" height="7" fill="#25282b"/><rect x="9" y="9" width="7" height="1" fill="#eac262"/><rect x="9" y="11" width="7" height="1" fill="#eac262"/><rect x="9" y="13" width="7" height="1" fill="#eac262"/></svg>
<div class="t" style="left:61.1px;top:561.8000000000001px;max-width:517.9px;overflow:hidden">unknown</div>
<div class="t" style="left:582.2px;top:561.8000000000001px;font-size:14.55px">jit-cache (deleted)</div>
<div class="bar" style="left:945.01px;top:558.90px;width:37.99px;height:21.8px"></div>
<div class="n" style="right:806.0px;top:560.60px">769</div>
<div class="bar" style="left:1142.83px;top:558.90px;width:35.17px;height:21.8px"></div>
<div class="n" style="right:611.0px;top:560.60px">765</div>
<div class="bar" style="left:1339.30px;top:558.90px;width:29.70px;height:21.8px"></div>
<div class="n" style="right:420.0px;top:560.60px">5,734,340</div>
<div class="bar" style="left:1495.00px;top:558.90px;width:25.00px;height:21.8px"></div>
<div class="n" style="right:269.0px;top:560.60px">5,719,004</div>
<div class="bar" style="left:1645.33px;top:558.90px;width:2.67px;height:21.8px"></div>
<div class="n" style="right:141.0px;top:560.60px">4</div>
<div class="n" style="right:11.0px;top:560.60px">15,336</div>
<svg class="a" style="left:25px;top:586px" width="10" height="9" viewBox="0 0 10 9"><path d="M0.3 0.2H9.3L4.8 8.1Z" fill="#c8c8c8"/></svg>
<svg class="a" style="left:43px;top:585px" width="18" height="16" viewBox="0 0 18 16"><circle cx="7.4" cy="7.1" r="7.1" fill="#b9606f"/><path d="M3.5 10V5.2M3.5 6.3Q4.3 5 5.6 5Q7.5 5 7.5 6.6V10M7.5 6.6Q7.6 5 9.2 5Q11 5 11 6.8V10" stroke="#4a1c26" stroke-width="1" fill="none"/><rect x="8" y="8" width="8" height="8" fill="#25282b"/><rect x="9" y="9" width="6.4" height="6" fill="#a5844f"/></svg>
<div class="t" style="left:61.1px;top:583.32px;max-width:517.9px;overflow:hidden">__libc_init</div>
<div class="t" style="left:582.2px;top:583.32px;font-size:14.55px">libc.so</div>
<div class="bar" style="left:954.25px;top:580.42px;width:28.75px;height:21.8px"></div>
<div class="n" style="right:806.0px;top:582.12px">582</div>
<div class="bar" style="left:1151.61px;top:580.42px;width:26.39px;height:21.8px"></div>
<div class="n" style="right:611.0px;top:582.12px">574</div>
<div class="bar" style="left:1347.49px;top:580.42px;width:21.51px;height:21.8px"></div>
<div class="n" style="right:420.0px;top:582.12px">4,153,100</div>
<div class="bar" style="left:1502.05px;top:580.42px;width:17.95px;height:21.8px"></div>
<div class="n" style="right:269.0px;top:582.12px">4,106,180</div>
<div class="bar" style="left:1642.67px;top:580.42px;width:5.33px;height:21.8px"></div>
<div class="n" style="right:141.0px;top:582.12px">8</div>
<div class="bar" style="left:1775.38px;top:580.42px;width:2.62px;height:21.8px"></div>
<div class="n" style="right:11.0px;top:582.12px">46,920</div>
<svg class="a" style="left:43px;top:608px" width="10" height="9" viewBox="0 0 10 9"><path d="M0.3 0.2H9.3L4.8 8.1Z" fill="#c8c8c8"/></svg>
<svg class="a" style="left:61px;top:606px" width="18" height="16" viewBox="0 0 18 16"><circle cx="7.4" cy="7.1" r="7.1" fill="#b9606f"/><path d="M3.5 10V5.2M3.5 6.3Q4.3 5 5.6 5Q7.5 5 7.5 6.6V10M7.5 6.6Q7.6 5 9.2 5Q11 5 11 6.8V10" stroke="#4a1c26" stroke-width="1" fill="none"/><rect x="8" y="8" width="9" height="7" fill="#25282b"/><rect x="9" y="9" width="7" height="1" fill="#eac262"/><rect x="9" y="11" width="7" height="1" fill="#eac262"/><rect x="9" y="13" width="7" height="1" fill="#eac262"/></svg>
<div class="t" style="left:79.1px;top:604.84px;max-width:499.9px;overflow:hidden">main</div>
<div class="t" style="left:582.2px;top:604.84px;font-size:14.55px">app_process64</div>
<div class="bar" style="left:954.25px;top:601.94px;width:28.75px;height:21.8px"></div>
<div class="n" style="right:806.0px;top:603.64px">582</div>
<div class="bar" style="left:1151.61px;top:601.94px;width:26.39px;height:21.8px"></div>
<div class="n" style="right:611.0px;top:603.64px">574</div>
<div class="bar" style="left:1347.49px;top:601.94px;width:21.51px;height:21.8px"></div>
<div class="n" style="right:420.0px;top:603.64px">4,153,100</div>
<div class="bar" style="left:1502.05px;top:601.94px;width:17.95px;height:21.8px"></div>
<div class="n" style="right:269.0px;top:603.64px">4,106,180</div>
<div class="bar" style="left:1642.67px;top:601.94px;width:5.33px;height:21.8px"></div>
<div class="n" style="right:141.0px;top:603.64px">8</div>
<div class="bar" style="left:1775.38px;top:601.94px;width:2.62px;height:21.8px"></div>
<div class="n" style="right:11.0px;top:603.64px">46,920</div>
<svg class="a" style="left:61px;top:629px" width="10" height="9" viewBox="0 0 10 9"><path d="M0.3 0.2H9.3L4.8 8.1Z" fill="#c8c8c8"/></svg>
<svg class="a" style="left:79px;top:628px" width="18" height="16" viewBox="0 0 18 16"><circle cx="7.4" cy="7.1" r="7.1" fill="#b9606f"/><path d="M3.5 10V5.2M3.5 6.3Q4.3 5 5.6 5Q7.5 5 7.5 6.6V10M7.5 6.6Q7.6 5 9.2 5Q11 5 11 6.8V10" stroke="#4a1c26" stroke-width="1" fill="none"/><rect x="8" y="8" width="8" height="8" fill="#25282b"/><rect x="9" y="9" width="6.4" height="6" fill="#a5844f"/></svg>
<div class="t" style="left:97.1px;top:626.36px;max-width:481.9px;overflow:hidden">android::AndroidRuntime::start(char const*, android::Vector&lt;android::String8&gt; const&amp;, bool)</div>
<div class="t" style="left:582.2px;top:626.36px;font-size:14.55px">libandroid_runtime.so</div>
<div class="bar" style="left:954.25px;top:623.46px;width:28.75px;height:21.8px"></div>
<div class="n" style="right:806.0px;top:625.16px">582</div>
<div class="bar" style="left:1151.61px;top:623.46px;width:26.39px;height:21.8px"></div>
<div class="n" style="right:611.0px;top:625.16px">574</div>
<div class="bar" style="left:1347.49px;top:623.46px;width:21.51px;height:21.8px"></div>
<div class="n" style="right:420.0px;top:625.16px">4,153,100</div>
<div class="bar" style="left:1502.05px;top:623.46px;width:17.95px;height:21.8px"></div>
<div class="n" style="right:269.0px;top:625.16px">4,106,180</div>
<div class="bar" style="left:1642.67px;top:623.46px;width:5.33px;height:21.8px"></div>
<div class="n" style="right:141.0px;top:625.16px">8</div>
<div class="bar" style="left:1775.38px;top:623.46px;width:2.62px;height:21.8px"></div>
<div class="n" style="right:11.0px;top:625.16px">46,920</div>
<svg class="a" style="left:79px;top:651px" width="10" height="9" viewBox="0 0 10 9"><path d="M0.3 0.2H9.3L4.8 8.1Z" fill="#c8c8c8"/></svg>
<svg class="a" style="left:97px;top:649px" width="18" height="16" viewBox="0 0 18 16"><circle cx="7.4" cy="7.1" r="7.1" fill="#b9606f"/><path d="M3.5 10V5.2M3.5 6.3Q4.3 5 5.6 5Q7.5 5 7.5 6.6V10M7.5 6.6Q7.6 5 9.2 5Q11 5 11 6.8V10" stroke="#4a1c26" stroke-width="1" fill="none"/><rect x="8" y="8" width="9" height="7" fill="#25282b"/><rect x="9" y="9" width="7" height="1" fill="#eac262"/><rect x="9" y="11" width="7" height="1" fill="#eac262"/><rect x="9" y="13" width="7" height="1" fill="#eac262"/></svg>
<div class="t" style="left:115.10000000000001px;top:647.88px;max-width:463.9px;overflow:hidden">_JNIEnv::CallStaticVoidMethod(_jclass*, _jmethodID*, ...)</div>
<div class="t" style="left:582.2px;top:647.88px;font-size:14.55px">libandroid_runtime.so</div>
<div class="bar" style="left:954.25px;top:644.98px;width:28.75px;height:21.8px"></div>
<div class="n" style="right:806.0px;top:646.68px">582</div>
<div class="bar" style="left:1151.61px;top:644.98px;width:26.39px;height:21.8px"></div>
<div class="n" style="right:611.0px;top:646.68px">574</div>
<div class="bar" style="left:1347.49px;top:644.98px;width:21.51px;height:21.8px"></div>
<div class="n" style="right:420.0px;top:646.68px">4,153,100</div>
<div class="bar" style="left:1502.05px;top:644.98px;width:17.95px;height:21.8px"></div>
<div class="n" style="right:269.0px;top:646.68px">4,106,180</div>
<div class="bar" style="left:1642.67px;top:644.98px;width:5.33px;height:21.8px"></div>
<div class="n" style="right:141.0px;top:646.68px">8</div>
<div class="bar" style="left:1775.38px;top:644.98px;width:2.62px;height:21.8px"></div>
<div class="n" style="right:11.0px;top:646.68px">46,920</div>
<svg class="a" style="left:97px;top:673px" width="10" height="10" viewBox="0 0 10 10"><path d="M0.4 0.1V9.3L8.5 4.7Z" fill="#c8c8c8"/></svg>
<svg class="a" style="left:115px;top:671px" width="18" height="16" viewBox="0 0 18 16"><circle cx="7.4" cy="7.1" r="7.1" fill="#b9606f"/><path d="M3.5 10V5.2M3.5 6.3Q4.3 5 5.6 5Q7.5 5 7.5 6.6V10M7.5 6.6Q7.6 5 9.2 5Q11 5 11 6.8V10" stroke="#4a1c26" stroke-width="1" fill="none"/><rect x="8" y="8" width="8" height="8" fill="#25282b"/><rect x="9" y="9" width="6.4" height="6" fill="#a5844f"/></svg>
<div class="t" style="left:133.10000000000002px;top:669.4px;max-width:445.9px;overflow:hidden">art::JNI::CallStaticVoidMethodV(_JNIEnv*, _jclass*, _jmethodID*, std::__va_list)</div>
<div class="t" style="left:582.2px;top:669.4px;font-size:14.55px">libart.so</div>
<div class="bar" style="left:954.25px;top:666.50px;width:28.75px;height:21.8px"></div>
<div class="n" style="right:806.0px;top:668.20px">582</div>
<div class="bar" style="left:1151.61px;top:666.50px;width:26.39px;height:21.8px"></div>
<div class="n" style="right:611.0px;top:668.20px">574</div>
<div class="bar" style="left:1347.49px;top:666.50px;width:21.51px;height:21.8px"></div>
<div class="n" style="right:420.0px;top:668.20px">4,153,100</div>
<div class="bar" style="left:1502.05px;top:666.50px;width:17.95px;height:21.8px"></div>
<div class="n" style="right:269.0px;top:668.20px">4,106,180</div>
<div class="bar" style="left:1642.67px;top:666.50px;width:5.33px;height:21.8px"></div>
<div class="n" style="right:141.0px;top:668.20px">8</div>
<div class="bar" style="left:1775.38px;top:666.50px;width:2.62px;height:21.8px"></div>
<div class="n" style="right:11.0px;top:668.20px">46,920</div>
<svg class="a" style="left:25px;top:694px" width="10" height="9" viewBox="0 0 10 9"><path d="M0.3 0.2H9.3L4.8 8.1Z" fill="#c8c8c8"/></svg>
<svg class="a" style="left:43px;top:692px" width="18" height="16" viewBox="0 0 18 16"><circle cx="7.4" cy="7.1" r="7.1" fill="#b9606f"/><path d="M3.5 10V5.2M3.5 6.3Q4.3 5 5.6 5Q7.5 5 7.5 6.6V10M7.5 6.6Q7.6 5 9.2 5Q11 5 11 6.8V10" stroke="#4a1c26" stroke-width="1" fill="none"/><rect x="8" y="8" width="9" height="7" fill="#25282b"/><rect x="9" y="9" width="7" height="1" fill="#eac262"/><rect x="9" y="11" width="7" height="1" fill="#eac262"/><rect x="9" y="13" width="7" height="1" fill="#eac262"/></svg>
<div class="t" style="left:61.1px;top:690.92px;max-width:517.9px;overflow:hidden">ERROR 2</div>
<div class="t" style="left:582.2px;top:690.92px;font-size:14.55px">ERROR</div>
<div class="n" style="right:806.0px;top:689.72px">3</div>
<div class="n" style="right:611.0px;top:689.72px">2</div>
<div class="n" style="right:420.0px;top:689.72px">14,336</div>
<div class="n" style="right:269.0px;top:689.72px">8,192</div>
<div class="n" style="right:141.0px;top:689.72px">1</div>
<div class="n" style="right:11.0px;top:689.72px">6,144</div>
<div class="a" style="left:12.5px;top:709.24px;width:1765.5px;height:21.5px;background:#1a5ae0"></div>
<svg class="a" style="left:43px;top:716px" width="10" height="9" viewBox="0 0 10 9"><path d="M0.3 0.2H9.3L4.8 8.1Z" fill="#c8c8c8"/></svg>
<svg class="a" style="left:61px;top:714px" width="18" height="16" viewBox="0 0 18 16"><circle cx="7.4" cy="7.1" r="7.1" fill="#a97bd8"/><path d="M3.5 10V5.2M3.5 6.3Q4.3 5 5.6 5Q7.5 5 7.5 6.6V10M7.5 6.6Q7.6 5 9.2 5Q11 5 11 6.8V10" stroke="#2e1545" stroke-width="1" fill="none"/><rect x="8" y="8" width="8" height="8" fill="#1a5ae0"/><rect x="9" y="9" width="6.4" height="6" fill="#9399b0"/></svg>
<div class="t" style="left:79.1px;top:712.4399999999999px;max-width:499.9px;overflow:hidden">unknown</div>
<div class="t" style="left:582.2px;top:712.4399999999999px;font-size:14.55px">jit-cache (deleted)</div>
<div class="n" style="right:806.0px;top:711.24px">3</div>
<div class="n" style="right:611.0px;top:711.24px">2</div>
<div class="n" style="right:420.0px;top:711.24px">14,336</div>
<div class="n" style="right:269.0px;top:711.24px">8,192</div>
<div class="n" style="right:141.0px;top:711.24px">1</div>
<div class="n" style="right:11.0px;top:711.24px">6,144</div>
<svg class="a" style="left:61px;top:737px" width="10" height="9" viewBox="0 0 10 9"><path d="M0.3 0.2H9.3L4.8 8.1Z" fill="#c8c8c8"/></svg>
<svg class="a" style="left:79px;top:735px" width="18" height="16" viewBox="0 0 18 16"><circle cx="7.4" cy="7.1" r="7.1" fill="#b9606f"/><path d="M3.5 10V5.2M3.5 6.3Q4.3 5 5.6 5Q7.5 5 7.5 6.6V10M7.5 6.6Q7.6 5 9.2 5Q11 5 11 6.8V10" stroke="#4a1c26" stroke-width="1" fill="none"/><rect x="8" y="8" width="9" height="7" fill="#25282b"/><rect x="9" y="9" width="7" height="1" fill="#eac262"/><rect x="9" y="11" width="7" height="1" fill="#eac262"/><rect x="9" y="13" width="7" height="1" fill="#eac262"/></svg>
<div class="t" style="left:97.1px;top:733.9599999999999px;max-width:481.9px;overflow:hidden">art_jni_trampoline</div>
<div class="t" style="left:582.2px;top:733.9599999999999px;font-size:14.55px">boot.oat</div>
<div class="n" style="right:806.0px;top:732.76px">2</div>
<div class="n" style="right:611.0px;top:732.76px">2</div>
<div class="n" style="right:420.0px;top:732.76px">8,192</div>
<div class="n" style="right:269.0px;top:732.76px">8,192</div>
<div class="n" style="right:141.0px;top:732.76px">0</div>
<div class="n" style="right:11.0px;top:732.76px">0</div>
<svg class="a" style="left:79px;top:759px" width="10" height="10" viewBox="0 0 10 10"><path d="M0.4 0.1V9.3L8.5 4.7Z" fill="#c8c8c8"/></svg>
<svg class="a" style="left:97px;top:757px" width="18" height="16" viewBox="0 0 18 16"><circle cx="7.4" cy="7.1" r="7.1" fill="#b9606f"/><path d="M3.5 10V5.2M3.5 6.3Q4.3 5 5.6 5Q7.5 5 7.5 6.6V10M7.5 6.6Q7.6 5 9.2 5Q11 5 11 6.8V10" stroke="#4a1c26" stroke-width="1" fill="none"/><rect x="8" y="8" width="8" height="8" fill="#25282b"/><rect x="9" y="9" width="6.4" height="6" fill="#a5844f"/></svg>
<div class="t" style="left:115.10000000000001px;top:755.4800000000001px;max-width:463.9px;overflow:hidden">art::Throwable_nativeFillInStackTrace(_JNIEnv*, _jclass*)</div>
<div class="t" style="left:582.2px;top:755.4800000000001px;font-size:14.55px">libart.so</div>
<div class="n" style="right:806.0px;top:754.28px">2</div>
<div class="n" style="right:611.0px;top:754.28px">2</div>
<div class="n" style="right:420.0px;top:754.28px">8,192</div>
<div class="n" style="right:269.0px;top:754.28px">8,192</div>
<div class="n" style="right:141.0px;top:754.28px">0</div>
<div class="n" style="right:11.0px;top:754.28px">0</div>
<svg class="a" style="left:61px;top:780px" width="10" height="9" viewBox="0 0 10 9"><path d="M0.3 0.2H9.3L4.8 8.1Z" fill="#c8c8c8"/></svg>
<svg class="a" style="left:79px;top:778px" width="18" height="16" viewBox="0 0 18 16"><circle cx="7.4" cy="7.1" r="7.1" fill="#b9606f"/><path d="M3.5 10V5.2M3.5 6.3Q4.3 5 5.6 5Q7.5 5 7.5 6.6V10M7.5 6.6Q7.6 5 9.2 5Q11 5 11 6.8V10" stroke="#4a1c26" stroke-width="1" fill="none"/><rect x="8" y="8" width="9" height="7" fill="#25282b"/><rect x="9" y="9" width="7" height="1" fill="#eac262"/><rect x="9" y="11" width="7" height="1" fill="#eac262"/><rect x="9" y="13" width="7" height="1" fill="#eac262"/></svg>
<div class="t" style="left:97.1px;top:777.0000000000001px;max-width:481.9px;overflow:hidden">art_quick_to_interpreter_bridge</div>
<div class="t" style="left:582.2px;top:777.0000000000001px;font-size:14.55px">libart.so</div>
<div class="n" style="right:806.0px;top:775.80px">1</div>
<div class="n" style="right:611.0px;top:775.80px">0</div>
<div class="n" style="right:420.0px;top:775.80px">6,144</div>
<div class="n" style="right:269.0px;top:775.80px">0</div>
<div class="n" style="right:141.0px;top:775.80px">1</div>
<div class="n" style="right:11.0px;top:775.80px">6,144</div>
</body></html>
